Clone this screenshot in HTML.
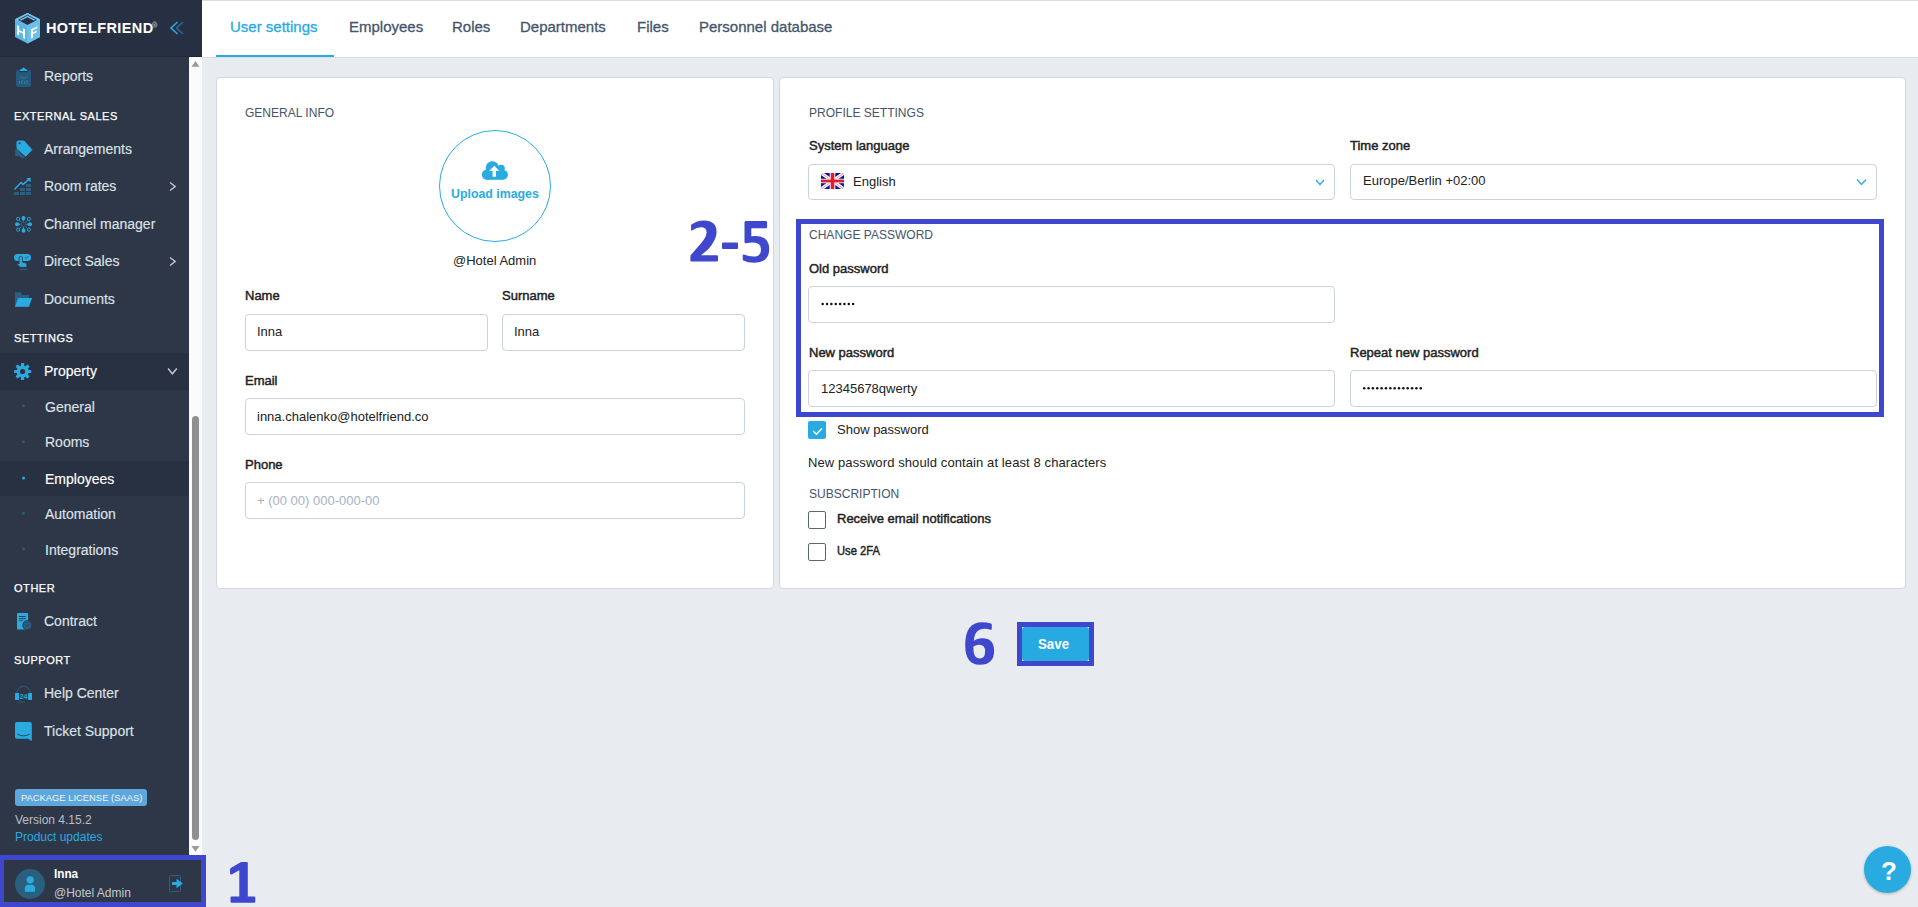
<!DOCTYPE html>
<html><head><meta charset="utf-8">
<style>
*{margin:0;padding:0;box-sizing:border-box}
html,body{width:1918px;height:907px;overflow:hidden;background:#e8ebf0;font-family:"Liberation Sans",sans-serif}
.a{position:absolute;white-space:nowrap}
#sb{position:absolute;left:0;top:0;width:202px;height:907px;background:#2e3748}
#sbh{position:absolute;left:0;top:0;width:202px;height:57px;background:#273042;border-bottom:1px solid #1f2735}
.it{position:absolute;left:44px;font-size:14px;line-height:16px;color:#dde1e7;-webkit-text-stroke:0.15px currentColor}
.sec{position:absolute;left:14px;font-size:11px;line-height:12px;color:#fff;letter-spacing:0.55px;-webkit-text-stroke:0.25px #fff}
.sub{position:absolute;left:45px;font-size:14px;line-height:16px;color:#dde1e7;-webkit-text-stroke:0.15px currentColor}
.dot{position:absolute;left:22px;width:3px;height:3px;border-radius:50%;background:#2a5f80}
#ch{position:absolute;left:202px;top:0;width:1716px;height:58px;background:#fff;border-top:1px solid #d9dde3;border-bottom:1px solid #d9dde3}
.tab{position:absolute;top:19px;font-size:15px;line-height:16px;color:#45556c;-webkit-text-stroke:0.3px currentColor}
.card{position:absolute;top:77px;height:512px;background:#fff;border:1px solid #d3d8df;border-radius:4px}
.ttl{position:absolute;font-size:13px;line-height:14px;color:#45546a;transform:scaleX(0.925);transform-origin:0 0}
.lbl{position:absolute;font-size:13px;line-height:14px;color:#222;-webkit-text-stroke:0.45px #222}
.inp{position:absolute;height:37px;border:1px solid #ccd3dc;border-radius:4px;background:#fff}
.val{position:absolute;font-size:13px;line-height:14px;color:#222}
.ann{position:absolute;border:5px solid #3f48cc}
</style></head><body>
<div id="sb">
 <div id="sbh"></div>
 <div style="position:absolute;left:0;top:353px;width:189px;height:37px;background:#283142"></div>
 <div style="position:absolute;left:0;top:461px;width:189px;height:35px;background:#283142"></div>

 <div class="a" id="logo" style="left:46px;top:19.5px;font-size:14.5px;line-height:16px;font-weight:bold;color:#fff;letter-spacing:0.4px">HOTELFRIEND</div>
 <div class="a" style="left:152px;top:21px;font-size:7px;line-height:8px;color:#9aa3af">&reg;</div>

<svg style="position:absolute;left:0;top:0" width="202" height="907" viewBox="0 0 202 907">
 <!-- logo cube -->
 <polygon points="27.5,13 40,19.3 40,37 27.5,43.5 15,37 15,19.3" fill="#5db6e2"/>
 <polygon points="27.5,25.6 40,19.3 40,37 27.5,43.5" fill="#6bc0ea"/>
 <polygon points="27.5,13 40,19.3 27.5,25.6 15,19.3" fill="#76c6ee"/>
 <polygon points="27.5,15.2 36.3,19.8 27.5,24.4 18.7,19.8" fill="none" stroke="#273042" stroke-width="0.9"/>
 <polygon points="27.5,17.3 34.6,21 27.5,24.7 20.4,21" fill="#273042"/>
 <g fill="#fff">
  <polygon points="17.2,25 19.2,26 19.2,35.6 17.2,34.6"/>
  <polygon points="23,28.3 25,29.3 25,38.9 23,37.9"/>
  <polygon points="19.2,30 23,32 23,33.7 19.2,31.7"/>
  <polygon points="31,29.5 33,28.5 33,37.6 31,38.6"/>
  <polygon points="31,29.5 37.4,26.2 37.4,28 31,31.3"/>
  <polygon points="33,32.4 36.6,30.6 36.6,32.3 33,34.1"/>
 </g>
 <circle cx="154.6" cy="25" r="2.4" fill="none" stroke="#8b94a3" stroke-width="0.8"/><circle cx="154.6" cy="25" r="0.9" fill="#8b94a3"/>
 <!-- collapse chevrons -->
 <polyline points="177.5,22 171,28 177.5,34" fill="none" stroke="#29abe2" stroke-width="1.6"/>
 <polyline points="183,22 176.5,28 183,34" fill="none" stroke="#2b6a95" stroke-width="1.6"/>
 <!-- reports clipboard -->
 <rect x="16" y="70" width="15" height="17" rx="2" fill="#245a7c"/>
 <rect x="20" y="69" width="7" height="3" rx="1.2" fill="#29abe2"/><circle cx="23.5" cy="69" r="1.6" fill="#29abe2"/>
 <rect x="19.5" y="71" width="8" height="1.2" fill="#273042"/>
 <path d="M19.5,78.5 Q21,76.5 22.5,78 T26,77.5 L27.5,76.8" fill="none" stroke="#3a7aa3" stroke-width="0.8"/>
 <g fill="#3a7aa3"><rect x="19" y="81" width="1" height="3"/><rect x="21.5" y="80" width="1" height="4"/><rect x="24" y="81" width="1" height="3"/><rect x="26.5" y="80" width="1" height="4"/></g>
 <!-- arrangements tag -->
 <polygon points="15.2,149 18.5,149 21.5,156.5 15.2,156" fill="#2a5f80"/>
 <polygon points="19.5,152 22.5,155 25,158 20.5,158" fill="#2a5f80"/>
 <path d="M17.8,141 L23.9,141 L31.9,149.7 L25.6,156.2 L17,148.2 L17,141.8 Z" fill="#29abe2" stroke="#29abe2" stroke-width="1" stroke-linejoin="round"/>
 <circle cx="19.6" cy="143.3" r="1" fill="#2e3748"/>
 <!-- room rates -->
 <polyline points="14.8,189 21.1,182.5 23.1,184.4 28.5,179.8" fill="none" stroke="#29abe2" stroke-width="1.5" stroke-linecap="round"/>
 <polygon points="26.3,178.2 30.8,177.8 30.4,182.2" fill="#29abe2"/>
 <g fill="#2a5f80"><rect x="14" y="192" width="5" height="3"/><rect x="20" y="192" width="5" height="3"/><rect x="26" y="192" width="5" height="3"/><rect x="20" y="188" width="5" height="3"/><rect x="26" y="188" width="5" height="3"/><rect x="26" y="184" width="5" height="3"/></g>
 <!-- channel manager -->
 <rect x="21.6" y="222.4" width="3.8" height="3.8" fill="none" stroke="#2a5f80" stroke-width="0.9"/>
 <g fill="#29abe2">
  <circle cx="23.5" cy="217.9" r="2"/><polygon points="22.3,219 24.7,219 23.5,222"/>
  <circle cx="23.5" cy="230.8" r="2"/><polygon points="22.3,229.6 24.7,229.6 23.5,226.6"/>
  <circle cx="17" cy="224.3" r="2"/><polygon points="18,223.1 18,225.5 21,224.3"/>
  <circle cx="30" cy="224.3" r="2"/><polygon points="29,223.1 29,225.5 26,224.3"/>
 </g>
 <g fill="none" stroke="#29abe2" stroke-width="0.9">
  <circle cx="18.1" cy="219" r="1.6"/><circle cx="28.9" cy="219" r="1.6"/><circle cx="18.1" cy="229.7" r="1.6"/><circle cx="28.9" cy="229.7" r="1.6"/>
  <line x1="19.5" y1="220.4" x2="20.8" y2="221.6"/><line x1="27.5" y1="220.4" x2="26.2" y2="221.6"/><line x1="19.5" y1="228.3" x2="20.8" y2="227.1"/><line x1="27.5" y1="228.3" x2="26.2" y2="227.1"/>
 </g>
 <!-- direct sales -->
 <rect x="14" y="254" width="17" height="7" rx="3.5" fill="#29abe2"/>
 <path d="M19.1,264 L19.1,257.2 Q20.8,255.2 22.5,257.2 L22.5,262.2 L26.8,263.2 L26.8,267.3 L20,267.3 L17,264.2 Q17.8,262.8 19.1,264 Z" fill="#29abe2" stroke="#2e3748" stroke-width="0.8"/>
 <polyline points="25,257.3 26.2,258.5 28.2,256.3" fill="none" stroke="#2e3748" stroke-width="0.8"/>
 <rect x="20" y="268.8" width="6.8" height="1.3" fill="#2a5f80"/>
 <!-- documents -->
 <polygon points="15,292.3 20.7,292.3 22,295 29,295 29,306.8 15,306.8" fill="#2a5f80"/>
 <polygon points="18.1,298.1 32.1,298.1 28.9,306.8 15,306.8" fill="#29abe2"/>
 <!-- property gear -->
 <g transform="translate(22.6,371.5)">
  <circle r="6" fill="#29abe2"/>
  <g fill="#29abe2">
   <rect x="-1.6" y="-8.5" width="3.2" height="17" rx="0.6"/>
   <rect x="-1.6" y="-8.5" width="3.2" height="17" rx="0.6" transform="rotate(45)"/>
   <rect x="-1.6" y="-8.5" width="3.2" height="17" rx="0.6" transform="rotate(90)"/>
   <rect x="-1.6" y="-8.5" width="3.2" height="17" rx="0.6" transform="rotate(135)"/>
  </g>
  <circle r="2.6" fill="#283142"/>
 </g>
 <!-- contract -->
 <rect x="17" y="613" width="11.1" height="16.6" rx="1" fill="#29abe2"/>
 <g fill="#2e3748"><rect x="19.1" y="616" width="6.7" height="1"/><rect x="19.1" y="618.2" width="6.7" height="1"/></g>
 <rect x="19.1" y="620.2" width="4" height="1" fill="#2a5f80"/>
 <circle cx="27.3" cy="625.2" r="4.9" fill="#2e3748"/>
 <circle cx="27.3" cy="625.2" r="4" fill="#2a5f80"/>
 <polyline points="25.5,624.8 27,626.4 29,624.3" fill="none" stroke="#2e3748" stroke-width="0.9"/>
 <!-- help center -->
 <path d="M17,693.5 A6.6,7.2 0 0 1 30.2,693.5" fill="none" stroke="#2a5f80" stroke-width="1"/>
 <rect x="15" y="693" width="4" height="7" rx="0.5" fill="#29abe2"/>
 <rect x="28" y="693" width="4" height="7" rx="0.5" fill="#29abe2"/>
 <text x="23.5" y="699.3" font-family="Liberation Sans" font-size="6.8" font-weight="bold" fill="#29abe2" text-anchor="middle">24</text>
 <rect x="17" y="701.5" width="8" height="0.8" fill="#2a5f80"/>
 <!-- ticket support -->
 <path d="M17,722 L29.8,722 Q31.8,722 31.8,724 L31.8,741 L28,738.7 L17,738.7 Q15,738.7 15,736.7 L15,724 Q15,722 17,722 Z" fill="#29abe2"/>
 <path d="M17.5,734.2 Q23.5,737.5 29.5,734.2" fill="none" stroke="#2e3748" stroke-width="0.9"/>
 <!-- chevrons right -->
 <polyline points="170,182.5 175.2,186.5 170,190.5" fill="none" stroke="#c5cad3" stroke-width="1.4"/>
 <polyline points="170,257.5 175.2,261.5 170,265.5" fill="none" stroke="#c5cad3" stroke-width="1.4"/>
 <polyline points="168,368.5 172.4,373.8 176.8,368.5" fill="none" stroke="#c5cad3" stroke-width="1.4"/>
 <!-- sub dots -->
 <circle cx="23.5" cy="405.8" r="1.4" fill="#2a5f80"/>
 <circle cx="23.5" cy="441.8" r="1.4" fill="#2a5f80"/>
 <circle cx="23.5" cy="477.9" r="1.5" fill="#29abe2"/>
 <circle cx="23.5" cy="513.3" r="1.4" fill="#2a5f80"/>
 <circle cx="23.5" cy="549" r="1.4" fill="#2a5f80"/>
</svg>
 <div class="a it" style="top:68px">Reports</div>
 <div class="a sec" style="top:110px">EXTERNAL SALES</div>
 <div class="a it" style="top:141px">Arrangements</div>
 <div class="a it" style="top:178px">Room rates</div>
 <div class="a it" style="top:216px">Channel manager</div>
 <div class="a it" style="top:253px">Direct Sales</div>
 <div class="a it" style="top:291px">Documents</div>
 <div class="a sec" style="top:332px">SETTINGS</div>
 <div class="a it" style="top:363px;color:#fff">Property</div>
 <div class="a sub" style="top:399px">General</div>
 <div class="a sub" style="top:434px">Rooms</div>
 <div class="a sub" style="top:471px;color:#fff">Employees</div>
 <div class="a sub" style="top:506px">Automation</div>
 <div class="a sub" style="top:542px">Integrations</div>
 <div class="a sec" style="top:582px">OTHER</div>
 <div class="a it" style="top:613px">Contract</div>
 <div class="a sec" style="top:654px">SUPPORT</div>
 <div class="a it" style="top:685px">Help Center</div>
 <div class="a it" style="top:723px">Ticket Support</div>

 <!-- scrollbar -->
 <div style="position:absolute;left:189px;top:57px;width:13px;height:798px;background:#fbfbfb"></div>
 <svg style="position:absolute;left:189px;top:57px" width="13" height="798" viewBox="0 0 13 798">
  <polygon points="2.5,9.7 6.5,4 10.5,9.7" fill="#9a9a9a"/>
  <rect x="3" y="359" width="7" height="424" rx="3.5" fill="#909090"/>
  <polygon points="2.5,789 6.5,794.7 10.5,789" fill="#9a9a9a"/>
 </svg>
 <!-- badge / version -->
 <div style="position:absolute;left:15px;top:789px;width:132px;height:17px;background:#5ea7dc;border-radius:3px"></div>
 <div class="a" style="left:21px;top:792.5px;font-size:9.3px;line-height:11px;color:#f2f6fa;letter-spacing:0.05px">PACKAGE LICENSE (SAAS)</div>
 <div class="a" style="left:15px;top:813px;font-size:12px;line-height:14px;color:#b9bec7">Version 4.15.2</div>
 <div class="a" style="left:15px;top:830px;font-size:12px;line-height:14px;color:#29abe2">Product updates</div>
 <!-- user -->
 <svg style="position:absolute;left:0;top:855px" width="202" height="52" viewBox="0 855 202 52">
  <circle cx="30" cy="884" r="15" fill="#2a5f80"/>
  <circle cx="30.2" cy="879.8" r="3.6" fill="#29abe2"/>
  <path d="M24.9,891.8 L24.9,888.5 Q24.9,884.8 28.5,884.8 L31.5,884.8 Q35.1,884.8 35.1,888.5 L35.1,891.8 Z" fill="#29abe2"/>
  <rect x="169.5" y="875.5" width="11" height="16" rx="1" fill="none" stroke="#2a5f80" stroke-width="1"/>
  <rect x="172" y="882" width="5" height="3" fill="#29abe2"/>
  <polygon points="176.5,878.8 182.8,883.5 176.5,888.2" fill="#29abe2"/>
 </svg>
 <div class="a" style="left:54px;top:867px;font-size:13px;line-height:14px;color:#fff;font-weight:bold;transform:scaleX(0.9);transform-origin:0 0">Inna</div>
 <div class="a" style="left:54px;top:886px;font-size:12px;line-height:14px;color:#c3c8cf">@Hotel Admin</div>
</div>
<div id="ch"></div>

<div class="a tab" style="left:230px;color:#29abe2">User settings</div>
<div style="position:absolute;left:216px;top:55px;width:118px;height:2px;background:#29abe2"></div>
<div class="a tab" style="left:349px">Employees</div>
<div class="a tab" style="left:452px">Roles</div>
<div class="a tab" style="left:520px">Departments</div>
<div class="a tab" style="left:637px">Files</div>
<div class="a tab" style="left:699px">Personnel database</div>
<div class="card" style="left:216px;width:558px"></div>
<div class="card" style="left:779px;width:1127px"></div>

<div class="a ttl" style="left:245px;top:106px">GENERAL INFO</div>
<div style="position:absolute;left:439px;top:130px;width:112px;height:112px;border:1px solid #29abe2;border-radius:50%"></div>
<div class="a" style="left:451px;top:187px;font-size:13px;line-height:14px;font-weight:bold;color:#29abe2;transform:scaleX(0.95);transform-origin:0 0">Upload images</div>
<div class="a val" style="left:453px;top:254px">@Hotel Admin</div>
<div class="a lbl" style="left:245px;top:289px">Name</div>
<div class="inp" style="left:245px;top:314px;width:243px"></div>
<div class="a val" style="left:257px;top:325px">Inna</div>
<div class="a lbl" style="left:502px;top:289px">Surname</div>
<div class="inp" style="left:502px;top:314px;width:243px"></div>
<div class="a val" style="left:514px;top:325px">Inna</div>
<div class="a lbl" style="left:245px;top:374px">Email</div>
<div class="inp" style="left:245px;top:398px;width:500px"></div>
<div class="a val" style="left:257px;top:410px">inna.chalenko@hotelfriend.co</div>
<div class="a lbl" style="left:245px;top:458px">Phone</div>
<div class="inp" style="left:245px;top:482px;width:500px"></div>
<div class="a val" style="left:257px;top:494px;color:#a9b3c1">+ (00 00) 000-000-00</div>

<div class="a ttl" style="left:808.5px;top:106px">PROFILE SETTINGS</div>
<div class="a lbl" style="left:809px;top:139px">System language</div>
<div class="inp" style="left:808px;top:164px;width:527px;height:36px"></div>
<div class="a val" style="left:853px;top:175px">English</div>
<div class="a lbl" style="left:1350px;top:139px">Time zone</div>
<div class="inp" style="left:1350px;top:164px;width:527px;height:36px"></div>
<div class="a val" style="left:1363px;top:174px">Europe/Berlin +02:00</div>
<div class="a ttl" style="left:808.5px;top:228px">CHANGE PASSWORD</div>
<div class="a lbl" style="left:809px;top:262px">Old password</div>
<div class="inp" style="left:808px;top:286px;width:527px"></div>
<div class="a lbl" style="left:809px;top:346px">New password</div>
<div class="inp" style="left:808px;top:370px;width:527px"></div>
<div class="a val" style="left:821px;top:382px">12345678qwerty</div>
<div class="a lbl" style="left:1350px;top:346px">Repeat new password</div>
<div class="inp" style="left:1350px;top:370px;width:527px"></div>
<div style="position:absolute;left:808px;top:421px;width:18px;height:18px;border-radius:2px;background:#29abe2"></div>
<div class="a val" style="left:837px;top:423px">Show password</div>
<div class="a val" style="left:808px;top:456px;letter-spacing:0.1px">New password should contain at least 8 characters</div>
<div class="a ttl" style="left:809px;top:487px">SUBSCRIPTION</div>
<div style="position:absolute;left:808px;top:511px;width:18px;height:18px;border:1px solid #5b6778;border-radius:2px;background:#fff"></div>
<div class="a lbl" style="left:837px;top:512px">Receive email notifications</div>
<div style="position:absolute;left:808px;top:543px;width:18px;height:18px;border:1px solid #5b6778;border-radius:2px;background:#fff"></div>
<div class="a lbl" style="left:837px;top:544px;transform:scaleX(0.86);transform-origin:0 0">Use 2FA</div>


<svg style="position:absolute;left:0;top:0;pointer-events:none" width="1918" height="907" viewBox="0 0 1918 907">
 <!-- cloud upload -->
 <g fill="#29abe2">
  <circle cx="492.3" cy="168" r="6.7"/>
  <circle cx="501.2" cy="168.3" r="3.6"/>
  <circle cx="487" cy="174.6" r="5.2"/>
  <circle cx="503" cy="174.8" r="4.9"/>
  <rect x="487" y="170" width="16" height="9.8"/>
 </g>
 <polygon points="494.3,165.8 499.3,171 496,171 496,176.8 492.6,176.8 492.6,171 489.2,171" fill="#fff"/>
 <!-- flag -->
 <defs><clipPath id="fc"><rect x="821" y="173" width="23" height="16" rx="3"/></clipPath></defs>
 <g clip-path="url(#fc)">
  <rect x="821" y="173" width="23" height="16" fill="#0a17a0"/>
  <path d="M821,173 L844,189 M844,173 L821,189" stroke="#fff" stroke-width="3.4"/>
  <path d="M821,173 L832.5,181 M844,189 L832.5,181 M844,173 L832.5,181 M821,189 L832.5,181" stroke="#f08a96" stroke-width="0.9"/>
  <rect x="821" y="178.8" width="23" height="4.4" fill="#fff"/>
  <rect x="829.7" y="173" width="5.6" height="16" fill="#fff"/>
  <rect x="821" y="179.6" width="23" height="2.8" fill="#e31b30"/>
  <rect x="830.7" y="173" width="3.6" height="16" fill="#e31b30"/>
 </g>
 <!-- select chevrons -->
 <polyline points="1316,180 1320,184.5 1324,180" fill="none" stroke="#29abe2" stroke-width="1.3"/>
 <polyline points="1857,179.5 1861.5,184.5 1866,179.5" fill="none" stroke="#29abe2" stroke-width="1.3"/>
 <!-- password dots -->
 <g fill="#111">
  <circle cx="822.70" cy="304" r="1.25"/>
  <circle cx="827.05" cy="304" r="1.25"/>
  <circle cx="831.40" cy="304" r="1.25"/>
  <circle cx="835.75" cy="304" r="1.25"/>
  <circle cx="840.10" cy="304" r="1.25"/>
  <circle cx="844.45" cy="304" r="1.25"/>
  <circle cx="848.80" cy="304" r="1.25"/>
  <circle cx="853.15" cy="304" r="1.25"/>
  <circle cx="1364.20" cy="388.3" r="1.25"/>
  <circle cx="1368.55" cy="388.3" r="1.25"/>
  <circle cx="1372.90" cy="388.3" r="1.25"/>
  <circle cx="1377.25" cy="388.3" r="1.25"/>
  <circle cx="1381.60" cy="388.3" r="1.25"/>
  <circle cx="1385.95" cy="388.3" r="1.25"/>
  <circle cx="1390.30" cy="388.3" r="1.25"/>
  <circle cx="1394.65" cy="388.3" r="1.25"/>
  <circle cx="1399.00" cy="388.3" r="1.25"/>
  <circle cx="1403.35" cy="388.3" r="1.25"/>
  <circle cx="1407.70" cy="388.3" r="1.25"/>
  <circle cx="1412.05" cy="388.3" r="1.25"/>
  <circle cx="1416.40" cy="388.3" r="1.25"/>
  <circle cx="1420.75" cy="388.3" r="1.25"/>
 </g>
 <!-- check -->
 <polyline points="813.1,430.9 816.4,434.2 822,428.3" fill="none" stroke="#fff" stroke-width="1.4"/>
</svg>
<div class="ann" style="left:796px;top:219px;width:1088px;height:198px"></div>
<div style="position:absolute;left:1022px;top:627px;width:67px;height:34px;background:#27aae1;border-radius:3px"></div>
<div class="a" style="left:1038px;top:637px;font-size:14px;line-height:14px;font-weight:bold;color:#fff;transform:scaleX(0.95);transform-origin:0 0">Save</div>
<div class="ann" style="left:1017px;top:622px;width:77px;height:44px"></div>
<div style="position:absolute;left:-1px;top:855px;width:207px;height:52px;border:5px solid #3f48cc"></div>
<div style="position:absolute;left:1864px;top:846px;width:47px;height:47px;border-radius:50%;background:#29abe2;box-shadow:0 1px 3px rgba(0,0,0,.25)"></div>
<div class="a" style="left:1881px;top:858px;font-size:26px;line-height:26px;font-weight:bold;color:#fff">?</div>

<svg style="position:absolute;left:0;top:0;pointer-events:none" width="1918" height="907" viewBox="0 0 1918 907">
 <g fill="#3f48cc" fill-rule="evenodd">
  <path d="M241,862 L246.8,862 Q247.8,862 247.8,863 L247.8,896.5 L254.3,896.5 Q255.3,896.5 255.3,897.5 L255.3,901.8 Q255.3,902.8 254.3,902.8 L231.5,902.8 Q230.5,902.8 230.5,901.8 L230.5,897.5 Q230.5,896.5 231.5,896.5 L239.3,896.5 L239.3,870.3 L232,874.2 Q230,875 230,873 L230,869.5 Q230,868.3 231.2,867.7 Z"/>
  <path d="M691.1,224.8 Q697,220.4 704,220.4 Q716.6,220.4 716.6,232 Q716.6,240 708,249.5 L701,255.3 L717,255.3 Q718,255.3 718,256.3 L718,260.6 Q718,261.6 717,261.6 L691.4,261.6 Q690.4,261.6 690.4,260.6 L690.4,256.5 Q690.4,255.3 691.3,254.5 L700,244.5 Q706.6,237 706.6,232.5 Q706.6,227.2 701,227.2 Q696.5,227.2 692.5,230.3 Q691.1,231.2 691.1,229.8 Z"/>
  <path d="M723,242.6 L737,242.6 Q738,242.6 738,243.6 L738,248 Q738,249 737,249 L723,249 Q722,249 722,248 L722,243.6 Q722,242.6 723,242.6 Z"/>
  <path d="M745.5,221 L766,221 Q767.1,221 767.1,222.5 L767.1,227 Q767.1,228.3 766,228.3 L751.3,228.3 L751.3,236.3 Q753,236 755.5,236 Q769.2,236 769.2,249 Q769.2,262.7 754,262.7 Q747.5,262.7 743.5,260.5 Q742.7,260 742.7,259 L742.7,255.5 Q742.7,254 744,254.6 Q748.5,256.6 753.5,256.6 Q761,256.6 761,249.3 Q761,242.6 753,242.6 Q749.5,242.6 746,243.3 Q744.5,243.5 744.5,242 L744.5,222.5 Q744.5,221 745.5,221 Z"/>
  <path d="M991,623.6 Q986.5,622.2 982,622.2 Q965.2,622.2 965.2,645 Q965.2,664.8 979.8,664.8 Q994.1,664.8 994.1,651 Q994.1,638.3 982.5,638.3 Q977,638.3 973.8,641 Q974.5,628.8 984.5,628.8 Q988,628.8 990.5,629.7 Q991.8,630 991.8,628.8 L991.8,624.8 Q991.8,623.9 991,623.6 Z M973.4,646.5 Q976,644.8 979.5,644.8 Q985.1,644.8 985.1,651.5 Q985.1,658.5 979.5,658.5 Q973.4,658.5 973.4,648 Z"/>
 </g>
</svg>
</body></html>
